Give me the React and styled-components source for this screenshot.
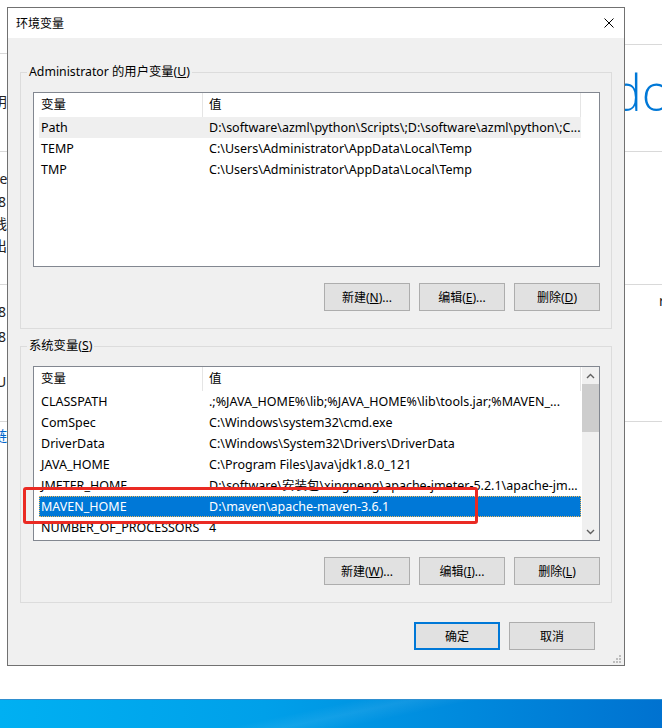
import React from 'react'
import styled, { createGlobalStyle } from 'styled-components'

const GlobalStyle = createGlobalStyle`
  html, body {
    margin: 0;
    padding: 0;
    background: #fff;
  }
  body {
    font-family: "Noto Sans", "Noto Sans CJK SC", sans-serif;
    font-size: 12px;
    color: #000;
  }
`

const Desktop = styled.div`
  position: relative;
  width: 662px;
  height: 728px;
  overflow: hidden;
  display: flex;
  flex-direction: column;
  background: #fff;
`

const Workspace = styled.div`
  height: 699px;
  display: flex;
`

const Strip = styled.div`
  width: ${p => p.$width ? `${p.$width}px` : 'auto'};
  flex: ${p => p.$width ? 'none' : '1'};
  overflow: hidden;
  display: flex;
  flex-direction: column;
`

const Band = styled.div`
  height: ${p => p.$h}px;
  flex: none;
  border-bottom: ${p => p.$line ? '1px solid #d9d9d9' : 'none'};
  box-sizing: border-box;
  overflow: hidden;
  display: flex;
  flex-direction: column;
`

const Fragment = styled.div`
  margin-top: ${p => p.$top || 0}px;
  margin-left: ${p => p.$shift || 0}px;
  height: ${p => p.$h || 18}px;
  line-height: ${p => p.$h || 18}px;
  font-size: 14px;
  white-space: nowrap;
  color: ${p => p.$link ? '#0066cc' : '#222'};
`

const Heading = styled.div`
  margin-top: ${p => p.$top}px;
  margin-left: ${p => p.$shift}px;
  font-family: "Open Sans", "Noto Sans", sans-serif;
  font-weight: 300;
  font-size: 50px;
  line-height: 50px;
  color: #0078d7;
  white-space: nowrap;
`

const Taskbar = styled.div`
  height: 29px;
  box-sizing: border-box;
  border-top: 1px solid #2f8fcf;
  background:
    linear-gradient(168deg, transparent 45%, rgba(255, 255, 255, 0.07) 52%, transparent 60%),
    linear-gradient(90deg, #00b0f2 0%, #00a0e9 40%, #0088dc 72%, #0072d0 100%);
`

const Dialog = styled.div`
  position: relative;
  width: 618px;
  height: 659px;
  margin-top: 7px;
  flex: none;
  box-sizing: border-box;
  border: 1px solid #717171;
  background: #f0f0f0;
  display: flex;
  flex-direction: column;
`

const TitleBar = styled.div`
  height: 30px;
  flex: none;
  background: #fff;
  display: flex;
  align-items: center;
  justify-content: space-between;
  padding-left: 8px;
`

const TitleText = styled.span`
  font-size: 12px;
`

const CloseButton = styled.div`
  width: 30px;
  height: 30px;
  display: flex;
  align-items: center;
  justify-content: center;
`

const Body = styled.div`
  flex: 1;
  display: flex;
  flex-direction: column;
  padding: 26px 12px 0 12px;
`

const GroupBox = styled.fieldset`
  margin: ${p => p.$gap || 0}px 0 0 0;
  padding: 12px 11px 17px 12px;
  min-width: 0;
  border: 1px solid #dcdcdc;
  display: flex;
  flex-direction: column;
`

const GroupLabel = styled.legend`
  margin-left: -6px;
  padding: 0 2px;
  line-height: 16px;
  font-size: 12.3px;
`

const List = styled.div`
  height: 175px;
  box-sizing: border-box;
  border: 1px solid #828790;
  background: #fff;
  display: flex;
  overflow: hidden;
  font-size: 12.5px;
`

const ListContent = styled.div`
  flex: 1;
  overflow: hidden;
`

const Header = styled.div`
  height: 24px;
  display: grid;
  grid-template-columns: 169px 378px;
`

const HeaderCell = styled.div`
  border-right: 1px solid #e5e5e5;
  padding-left: ${p => p.$pad}px;
  line-height: 24px;
`

const Row = styled.div`
  margin-left: 5px;
  width: 542px;
  height: 21px;
  box-sizing: border-box;
  display: grid;
  grid-template-columns: 164px 1fr;
  line-height: 21px;
  background: ${p => p.$state === 'active' ? '#0078d7' : p.$state === 'inactive' ? '#efefef' : 'transparent'};
  color: ${p => p.$state === 'active' ? '#fff' : '#000'};
  outline: ${p => p.$state === 'active' ? '1px dotted #f3b95a' : 'none'};
  outline-offset: -1px;
`

const Cell = styled.div`
  padding-left: ${p => p.$pad}px;
  white-space: nowrap;
  overflow: hidden;
`

const Scrollbar = styled.div`
  width: 17px;
  flex: none;
  background: #f0f0f0;
  display: flex;
  flex-direction: column;
`

const ScrollArrow = styled.div`
  height: 17px;
  flex: none;
  display: flex;
  align-items: center;
  justify-content: center;
`

const ScrollTrack = styled.div`
  flex: 1;
`

const ScrollThumb = styled.div`
  height: 48px;
  background: #cdcdcd;
`

const ButtonRow = styled.div`
  margin-top: ${p => p.$gap}px;
  margin-right: ${p => p.$inset || 0}px;
  display: flex;
  justify-content: flex-end;
  gap: 9px;
`

const Button = styled.div`
  width: 86px;
  height: 28px;
  box-sizing: border-box;
  border: ${p => p.$primary ? '2px solid #0078d7' : '1px solid #adadad'};
  background: #e1e1e1;
  display: flex;
  align-items: center;
  justify-content: center;
  font-size: 12px;
  white-space: nowrap;
`

const Grip = styled.svg`
  position: absolute;
  right: 3px;
  bottom: 2px;
`

const RedMark = styled.div`
  position: absolute;
  left: 23px;
  top: 487px;
  width: 455px;
  height: 37px;
  box-sizing: border-box;
  border: 3px solid #ea2a23;
  border-radius: 3px;
`

const userVars = [
  { name: 'Path', value: String.raw`D:\software\azml\python\Scripts\;D:\software\azml\python\;C...`, state: 'inactive' },
  { name: 'TEMP', value: String.raw`C:\Users\Administrator\AppData\Local\Temp` },
  { name: 'TMP', value: String.raw`C:\Users\Administrator\AppData\Local\Temp` },
]

const systemVars = [
  { name: 'CLASSPATH', value: String.raw`.;%JAVA_HOME%\lib;%JAVA_HOME%\lib\tools.jar;%MAVEN_...` },
  { name: 'ComSpec', value: String.raw`C:\Windows\system32\cmd.exe` },
  { name: 'DriverData', value: String.raw`C:\Windows\System32\Drivers\DriverData` },
  { name: 'JAVA_HOME', value: String.raw`C:\Program Files\Java\jdk1.8.0_121` },
  { name: 'JMETER_HOME', value: String.raw`D:\software\安装包\xingneng\apache-jmeter-5.2.1\apache-jm...` },
  { name: 'MAVEN_HOME', value: String.raw`D:\maven\apache-maven-3.6.1`, state: 'active' },
  { name: 'NUMBER_OF_PROCESSORS', value: '4' },
]

const Chevron = ({ up }) => (
  <svg width="9" height="6" viewBox="0 0 9 6">
    <path d={up ? 'M1 5 L4.5 1.5 L8 5' : 'M1 1 L4.5 4.5 L8 1'} fill="none" stroke="#606060" strokeWidth="1.4" />
  </svg>
)

const VarList = ({ rows, scroll }) => (
  <List>
    <ListContent>
      <Header>
        <HeaderCell $pad={7}>变量</HeaderCell>
        <HeaderCell $pad={6}>值</HeaderCell>
      </Header>
      {rows.map(r => (
        <Row key={r.name} $state={r.state}>
          <Cell $pad={2}>{r.name}</Cell>
          <Cell $pad={6}>{r.value}</Cell>
        </Row>
      ))}
    </ListContent>
    {scroll && (
      <Scrollbar>
        <ScrollArrow><Chevron up /></ScrollArrow>
        <ScrollTrack><ScrollThumb /></ScrollTrack>
        <ScrollArrow><Chevron /></ScrollArrow>
      </Scrollbar>
    )}
  </List>
)

const App = () => {
  return (
    <Desktop>
      <GlobalStyle />
      <Workspace>
        <Strip $width={7}>
          <Band $h={54} $line />
          <Band $h={98} $line>
            <Fragment $top={39} $shift={-7}>阴</Fragment>
          </Band>
          <Band $h={133} $line>
            <Fragment $top={16} $shift={-6} $h={22}>re</Fragment>
            <Fragment $shift={-2} $h={23}>8</Fragment>
            <Fragment $shift={-7} $h={22}>线</Fragment>
            <Fragment $shift={-7} $h={22}>出</Fragment>
          </Band>
          <Band $h={137} $line>
            <Fragment $top={14} $shift={-2} $h={25}>8</Fragment>
            <Fragment $shift={-2} $h={25}>8</Fragment>
            <Fragment $top={22} $shift={-4} $h={22}>U</Fragment>
          </Band>
          <Band $h={277}>
            <Fragment $top={5} $shift={-7} $link>链</Fragment>
          </Band>
        </Strip>

        <Dialog>
          <TitleBar>
            <TitleText>环境变量</TitleText>
            <CloseButton>
              <svg width="10" height="10" viewBox="0 0 10 10">
                <path d="M0.5 0.5 L9.5 9.5 M9.5 0.5 L0.5 9.5" stroke="#000" strokeWidth="1" />
              </svg>
            </CloseButton>
          </TitleBar>
          <Body>
            <GroupBox>
              <GroupLabel>Administrator 的用户变量(<u>U</u>)</GroupLabel>
              <VarList rows={userVars} />
              <ButtonRow $gap={16}>
                <Button>新建(<u>N</u>)...</Button>
                <Button>编辑(<u>E</u>)...</Button>
                <Button>删除(<u>D</u>)</Button>
              </ButtonRow>
            </GroupBox>
            <GroupBox $gap={9}>
              <GroupLabel>系统变量(<u>S</u>)</GroupLabel>
              <VarList rows={systemVars} scroll />
              <ButtonRow $gap={16}>
                <Button>新建(<u>W</u>)...</Button>
                <Button>编辑(<u>I</u>)...</Button>
                <Button>删除(<u>L</u>)</Button>
              </ButtonRow>
            </GroupBox>
            <ButtonRow $gap={19} $inset={17}>
              <Button $primary>确定</Button>
              <Button>取消</Button>
            </ButtonRow>
          </Body>
          <Grip width="8" height="8" viewBox="0 0 8 8">
            <rect x="6" y="0" width="2" height="2" fill="#bdbdbd" />
            <rect x="3" y="3" width="2" height="2" fill="#bdbdbd" />
            <rect x="6" y="3" width="2" height="2" fill="#bdbdbd" />
            <rect x="0" y="6" width="2" height="2" fill="#bdbdbd" />
            <rect x="3" y="6" width="2" height="2" fill="#bdbdbd" />
            <rect x="6" y="6" width="2" height="2" fill="#bdbdbd" />
          </Grip>
        </Dialog>

        <Strip>
          <Band $h={45} $line />
          <Band $h={107} $line>
            <Heading $top={22} $shift={-13}>do</Heading>
          </Band>
          <Band $h={133} $line />
          <Band $h={137} $line>
            <Fragment $top={9} $shift={34} $h={14}>r</Fragment>
          </Band>
          <Band $h={277} />
        </Strip>
      </Workspace>
      <Taskbar />
      <RedMark />
    </Desktop>
  )
}

export default App
